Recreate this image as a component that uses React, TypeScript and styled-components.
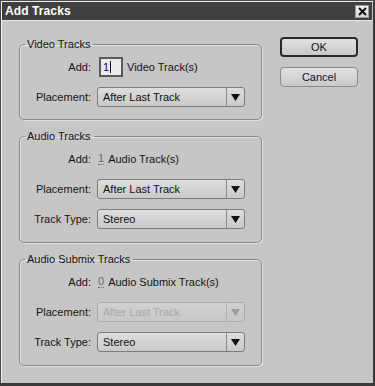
import styled, { createGlobalStyle } from "styled-components";

const GlobalStyle = createGlobalStyle`
  * { box-sizing: border-box; }
  body {
    margin: 0;
    font-family: "Liberation Sans", Arial, sans-serif;
    background: #c6c6c6;
  }
`;

interface SelectProps {
  value: string;
  disabled?: boolean;
}

function Select({ value, disabled }: SelectProps) {
  return (
    <SelectBox $disabled={disabled}>
      <SelectValue>{value}</SelectValue>
      <SelectArrow $disabled={disabled}>
        <svg width="9" height="7" viewBox="0 0 9 7">
          <path d="M0 0 H9 L4.5 7 Z" fill="currentColor" />
        </svg>
      </SelectArrow>
    </SelectBox>
  );
}

export default function App() {
  return (
    <>
      <GlobalStyle />
      <Window>
        <TitleBar>
          <Title>Add Tracks</Title>
          <CloseButton>
            <svg width="9" height="9" viewBox="0 0 9 9">
              <path d="M1 1 L8 8 M8 1 L1 8" stroke="#111" strokeWidth="2" />
            </svg>
          </CloseButton>
        </TitleBar>

        <Body>
          <Groups>
            <Group $bottom={7}>
              <Legend>Video Tracks</Legend>
              <Row>
                <Label>Add:</Label>
                <Inline>
                  <NumberField>
                    1<Caret />
                  </NumberField>
                  <span>Video Track(s)</span>
                </Inline>
              </Row>
              <Row>
                <Label>Placement:</Label>
                <Select value="After Last Track" />
              </Row>
            </Group>

            <Group>
              <Legend>Audio Tracks</Legend>
              <Row>
                <Label>Add:</Label>
                <Inline>
                  <HotText>1</HotText>
                  <span>Audio Track(s)</span>
                </Inline>
              </Row>
              <Row>
                <Label>Placement:</Label>
                <Select value="After Last Track" />
              </Row>
              <Row>
                <Label>Track Type:</Label>
                <Select value="Stereo" />
              </Row>
            </Group>

            <Group>
              <Legend>Audio Submix Tracks</Legend>
              <Row>
                <Label>Add:</Label>
                <Inline>
                  <HotText>0</HotText>
                  <span>Audio Submix Track(s)</span>
                </Inline>
              </Row>
              <Row>
                <Label>Placement:</Label>
                <Select value="After Last Track" disabled />
              </Row>
              <Row>
                <Label>Track Type:</Label>
                <Select value="Stereo" />
              </Row>
            </Group>
          </Groups>

          <Buttons>
            <Button $primary>OK</Button>
            <Button>Cancel</Button>
          </Buttons>
        </Body>
      </Window>
    </>
  );
}

const Window = styled.div`
  width: 375px;
  height: 386px;
  display: flex;
  flex-direction: column;
  background: #c6c6c6;
  border: 1px solid #4a4a4a;
  border-bottom: 3px solid #3a3a3a;
  border-right: 2px solid #3a3a3a;
  padding: 1px;
  box-shadow: inset 1px 1px 0 #eeeeee;
`;

const TitleBar = styled.div`
  height: 19px;
  flex: none;
  display: flex;
  align-items: center;
  justify-content: space-between;
  background: #404040;
  padding: 0 3px 0 3px;
  border-bottom: 1px solid #e4e4e4;
`;

const Title = styled.div`
  color: #ffffff;
  font-weight: 700;
  font-size: 12px;
  letter-spacing: 0.1px;
`;

const CloseButton = styled.div`
  width: 14px;
  height: 13px;
  display: flex;
  align-items: center;
  justify-content: center;
  background: linear-gradient(#f2f2f2, #d6d6d6);
  border: 1px solid #9a9a9a;
`;

const Body = styled.div`
  flex: 1;
  display: flex;
  padding: 17px 0 0 17px;
  gap: 18px;
`;

const Groups = styled.div`
  width: 243px;
  display: flex;
  flex-direction: column;
  gap: 10px;
`;

const Group = styled.fieldset<{ $bottom?: number }>`
  margin: 0;
  padding: 1px 16px ${(p) => p.$bottom ?? 8}px 0;
  border: 1px solid #8a8a8a;
  border-radius: 5px;
  box-shadow: inset 1px 1px 0 #e2e2e2, 1px 1px 0 #e2e2e2;
`;

const Legend = styled.legend`
  margin-left: 5px;
  padding: 0 3px 0 2px;
  font-size: 11px;
  line-height: 13px;
  color: #151515;
`;

const Row = styled.div`
  height: 30px;
  display: grid;
  grid-template-columns: 72px 1fr;
  column-gap: 5px;
  align-items: center;
`;

const Label = styled.div`
  text-align: right;
  font-size: 11px;
  color: #151515;
  padding-right: 1px;
`;

const Inline = styled.div`
  display: flex;
  align-items: center;
  gap: 4px;
  font-size: 11px;
  color: #151515;
`;

const NumberField = styled.div`
  width: 24px;
  height: 20px;
  margin-left: 2px;
  display: flex;
  align-items: center;
  padding-left: 2px;
  background: #ebebeb;
  border: 2px solid #5a5a5a;
  font-size: 11px;
  color: #111;
`;

const Caret = styled.span`
  width: 1px;
  height: 12px;
  background: #111;
  margin-left: 1px;
`;

const HotText = styled.span`
  margin-left: 1px;
  color: #6a6a6a;
  border-bottom: 1px dotted #6a6a6a;
  line-height: 11px;
`;

const SelectBox = styled.div<{ $disabled?: boolean }>`
  height: 20px;
  display: flex;
  border: 1px solid ${(p) => (p.$disabled ? "#acacac" : "#7c7c7c")};
  border-radius: 3px;
  background: ${(p) =>
    p.$disabled
      ? "linear-gradient(#d0d0d0, #c8c8c8)"
      : "linear-gradient(#dedede, #c9c9c9)"};
  color: ${(p) => (p.$disabled ? "#a9a9a9" : "#111")};
`;

const SelectValue = styled.div`
  flex: 1;
  display: flex;
  align-items: center;
  padding-left: 5px;
  font-size: 11px;
`;

const SelectArrow = styled.div<{ $disabled?: boolean }>`
  width: 18px;
  display: flex;
  align-items: center;
  justify-content: center;
  border-left: 1px solid ${(p) => (p.$disabled ? "#b0b0b0" : "#8a8a8a")};
  color: ${(p) => (p.$disabled ? "#9a9a9a" : "#111")};
`;

const Buttons = styled.div`
  width: 78px;
  display: flex;
  flex-direction: column;
  gap: 10px;
  margin-top: -1px;
`;

const Button = styled.div<{ $primary?: boolean }>`
  height: 20px;
  display: flex;
  align-items: center;
  justify-content: center;
  font-size: 11px;
  color: #151515;
  border-radius: 4px;
  border: ${(p) => (p.$primary ? "2px solid #2a2a2a" : "1px solid #8a8a8a")};
  background: linear-gradient(#e2e2e2, #c8c8c8);
`;
